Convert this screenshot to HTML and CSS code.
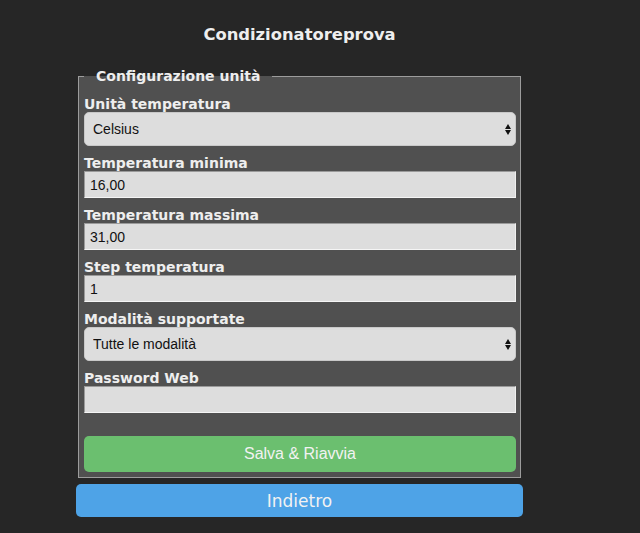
FILE: index.html
```html
<!DOCTYPE html>
<html lang="it">
<head>
<meta charset="utf-8">
<title>Condizionatoreprova</title>
<link rel="stylesheet" href="styles.css">
</head>
<body>
<div class="wrap">
  <h3 class="title">Condizionatoreprova</h3>
  <form class="form">
    <fieldset class="box">
      <legend class="legend">Configurazione unità</legend>
      <label class="lbl" for="unit">Unità temperatura</label>
      <div class="sel">
        <select id="unit" class="select"><option>Celsius</option><option>Fahrenheit</option></select>
      </div>
      <label class="lbl" for="tmin">Temperatura minima</label>
      <input id="tmin" class="txt" type="text" value="16,00">
      <label class="lbl" for="tmax">Temperatura massima</label>
      <input id="tmax" class="txt" type="text" value="31,00">
      <label class="lbl" for="step">Step temperatura</label>
      <input id="step" class="txt" type="text" value="1">
      <label class="lbl" for="mode">Modalità supportate</label>
      <div class="sel">
        <select id="mode" class="select"><option>Tutte le modalità</option></select>
      </div>
      <label class="lbl" for="pwd">Password Web</label>
      <input id="pwd" class="txt txt-last" type="password" value="">
      <button type="button" class="btn btn-save">Salva &amp; Riavvia</button>
    </fieldset>
  </form>
  <button type="button" class="btn btn-back">Indietro</button>
</div>
</body>
</html>
```

FILE: styles.css
```css
html, body {
  margin: 0;
  padding: 0;
  background: #262626;
}

body {
  font-family: "DejaVu Sans", Verdana, sans-serif;
  font-size: 14px;
  color: #eeeeee;
}

.wrap {
  width: 447px;
  margin-left: 76px;
  padding-top: 25px;
}

.title {
  margin: 0 0 24px;
  font-size: 16.38px;
  line-height: 19px;
  font-weight: bold;
  text-align: center;
  color: #eeeeee;
}

.form {
  margin: 0;
}

.box {
  margin: 0 2px;
  padding: 12px 4px 5px 5px;
  border: 1px solid #9c9c9c;
  background: #505050;
  min-width: 0;
}

.legend {
  padding: 0 12px;
  font-size: 14px;
  line-height: 16px;
  font-weight: bold;
  color: #eeeeee;
}

.lbl {
  display: block;
  font-size: 14px;
  line-height: 16px;
  font-weight: bold;
  color: #eeeeee;
}

.sel {
  position: relative;
  margin-bottom: 9px;
}

.sel::before,
.sel::after {
  content: "";
  position: absolute;
  right: 5px;
  width: 0;
  height: 0;
  border-left: 3.5px solid transparent;
  border-right: 3.5px solid transparent;
  pointer-events: none;
}

.sel::before {
  top: 12px;
  border-bottom: 5px solid #111;
}

.sel::after {
  top: 18px;
  border-top: 5px solid #111;
}

.select {
  display: block;
  width: 100%;
  height: 34px;
  box-sizing: border-box;
  margin: 0;
  padding: 0 20px 0 8px;
  -webkit-appearance: none;
  appearance: none;
  background: #dddddd;
  border: 1px solid #c8c8c8;
  border-radius: 5px;
  font-family: "Liberation Sans", Arial, sans-serif;
  font-size: 14px;
  color: #111;
}

.txt {
  display: block;
  width: 100%;
  height: 27px;
  box-sizing: border-box;
  margin: 0 0 9px;
  padding: 0 5px;
  background: #dddddd;
  border: 1px solid;
  border-color: #9a9a9a #efefef #f5f5f5 #9a9a9a;
  border-radius: 0;
  font-family: "Liberation Sans", Arial, sans-serif;
  font-size: 14px;
  color: #111;
  outline: none;
}

.txt-last {
  margin-bottom: 0;
}

.btn {
  display: block;
  width: 100%;
  box-sizing: border-box;
  border: none;
  border-radius: 5px;
  color: #f2f2f2;
  cursor: pointer;
  padding: 0;
}

.btn-save {
  height: 36px;
  margin-top: 23px;
  background: #6bbf6f;
  font-family: "Liberation Sans", Arial, sans-serif;
  font-size: 16px;
}

.btn-back {
  height: 33px;
  margin-top: 6px;
  background: #4ea3e7;
  font-family: "DejaVu Sans", Verdana, sans-serif;
  font-size: 17px;
}
```
